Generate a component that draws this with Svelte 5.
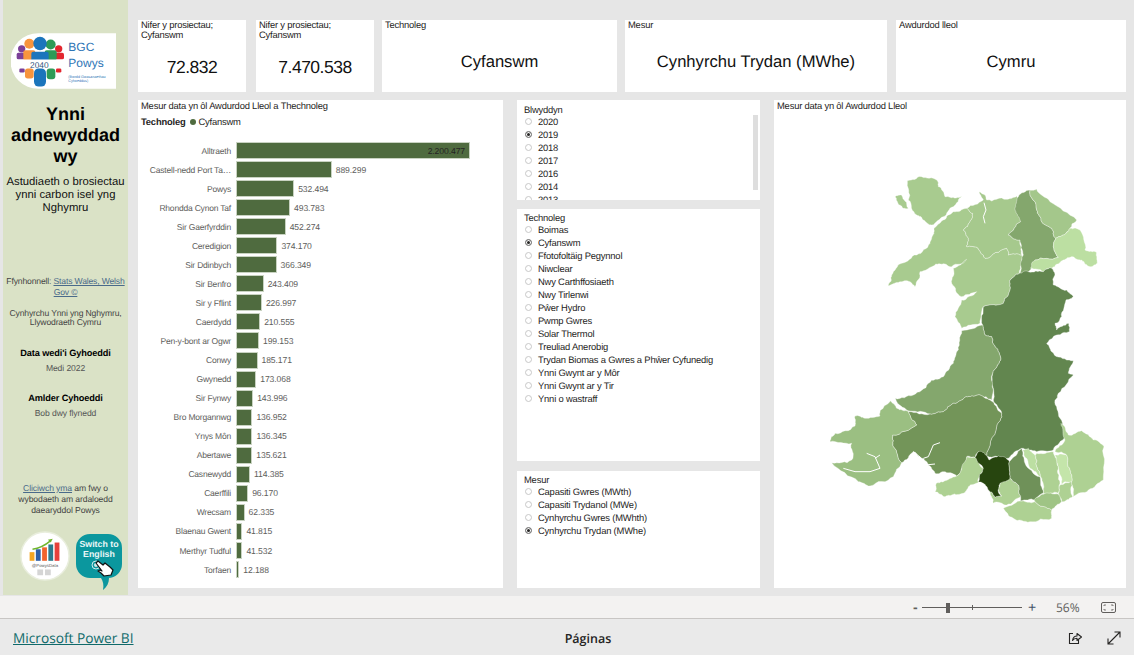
<script>
  const bars = [
    ['Alltraeth', 2200477], ['Castell-nedd Port Ta…', 889299], ['Powys', 532494],
    ['Rhondda Cynon Taf', 493783], ['Sir Gaerfyrddin', 452274], ['Ceredigion', 374170],
    ['Sir Ddinbych', 366349], ['Sir Benfro', 243409], ['Sir y Fflint', 226997],
    ['Caerdydd', 210555], ['Pen-y-bont ar Ogwr', 199153], ['Conwy', 185171],
    ['Gwynedd', 173068], ['Sir Fynwy', 143996], ['Bro Morgannwg', 136952],
    ['Ynys Môn', 136345], ['Abertawe', 135621], ['Casnewydd', 114385],
    ['Caerffili', 96170], ['Wrecsam', 62335], ['Blaenau Gwent', 41815],
    ['Merthyr Tudful', 41532], ['Torfaen', 12188]
  ];
  const maxValue = bars[0][1];
  const fmt = (n) => String(n).replace(/\B(?=(\d{3})+$)/g, '.');

  const years = ['2020', '2019', '2018', '2017', '2016', '2014', '2013'];
  const tech = [
    'Boimas', 'Cyfanswm', 'Ffotofoltäig Pegynnol', 'Niwclear', 'Nwy Carthffosiaeth',
    'Nwy Tirlenwi', 'Pŵer Hydro', 'Pwmp Gwres', 'Solar Thermol', 'Treuliad Anerobig',
    'Trydan Biomas a Gwres a Phŵer Cyfunedig', 'Ynni Gwynt ar y Môr', 'Ynni Gwynt ar y Tir',
    'Ynni o wastraff'
  ];
  const measures = ['Capasiti Gwres (MWth)', 'Capasiti Trydanol (MWe)', 'Cynhyrchu Gwres (MWhth)', 'Cynhyrchu Trydan (MWhe)'];

  // map shapes, traced in 3x coords from (780,160)
  const regions = [
    ['#a8cb8f', '382,62 425,50 470,60 475,80 495,110 510,112 545,108 520,140 490,170 455,195 430,180 410,165 385,120'],
    ['#a8cb8f', '345,110 365,105 378,125 385,145 370,145 350,122'],
    ['#a8cb8f', '455,235 462,205 490,180 520,155 560,145 578,160 570,185 550,210 565,235 560,260 590,262 615,295 680,265 685,285 725,285 718,340 690,360 685,405 670,430 610,440 600,490 545,505 525,470 545,420 590,395 545,410 515,370 520,325 560,298 515,320 495,312 460,318 420,335 405,380 390,365 365,365 325,378 335,345 365,310 410,285 450,250'],
    ['#a6c98d', '560,145 610,120 598,95 615,105 620,120 680,118 710,108 722,185 685,225 720,240 725,285 685,285 680,265 615,295 590,262 560,260 565,235 550,210 570,185 578,160'],
    ['#84a76d', '715,110 750,90 770,150 785,185 815,205 827,235 822,270 835,292 765,300 745,335 720,340 730,285 720,240 685,225 722,185 705,150'],
    ['#a4c78b', '750,90 770,87 810,125 890,180 870,205 850,225 827,235 815,205 785,185 770,150'],
    ['#bcdfa2', '870,205 900,210 915,270 950,278 952,310 930,320 905,300 878,290 850,300 830,312 815,325 790,335 752,325 765,300 835,292 822,270 827,235 850,225'],
    ['#62864f', '685,405 690,360 718,340 745,335 790,335 815,325 825,345 820,375 860,390 880,410 858,420 845,470 825,490 830,510 865,490 868,515 830,525 800,550 815,575 860,600 880,602 865,640 880,645 835,700 825,720 840,775 855,830 820,870 770,875 725,865 685,895 640,890 620,890 650,800 665,760 640,720 638,640 662,600 645,560 635,530 615,525 608,495 610,440 670,430'],
    ['#84a76d', '545,512 608,495 615,525 635,530 645,560 662,600 638,640 635,720 600,705 575,708 545,720 520,730 490,755 450,762 390,753 350,725 345,715 400,705 445,670 490,650 520,610 535,570'],
    ['#739559', '385,755 450,762 490,755 520,730 545,720 575,708 600,705 630,720 665,760 650,800 620,890 595,875 583,892 560,890 530,948 490,935 465,940 440,905 400,875 365,908 340,860 338,825 410,795'],
    ['#9bbf82', '332,722 350,745 385,755 410,795 338,825 340,860 365,908 340,950 270,978 235,965 155,908 215,900 215,850 150,845 165,820 225,798 225,768 255,775 300,768 300,752'],
    ['#aed193', '560,892 583,892 610,925 595,968 565,980 550,1000 515,1005 495,1010 465,995 468,970 490,965 530,948'],
    ['#aed193', '625,990 645,1012 665,1008 655,985 660,965 690,955 715,975 722,1010 680,1035 640,1030 635,1010'],
    ['#27450f', '595,875 612,878 628,900 665,890 688,905 690,955 660,970 655,995 665,1008 645,1012 625,990 610,970 595,965 610,925 585,892'],
    ['#aed193', '670,1045 720,1023 765,1025 815,1050 815,1075 750,1085 700,1075'],
    ['#6f9159', '688,905 725,865 735,910 780,950 790,1000 765,1020 722,1023 722,1010 715,975 690,955'],
    ['#bcdfa2', '728,870 745,865 765,885 770,920 782,950 750,925'],
    ['#aed193', '770,880 820,875 835,920 840,970 835,1000 790,1000 782,950 770,920 765,885'],
    ['#c4e5aa', '825,885 860,885 870,930 875,965 845,972 835,920'],
    ['#9fc485', '763,1018 790,1003 835,1002 845,1025 815,1050 765,1025'],
    ['#aed193', '835,1000 840,975 875,965 878,1010 860,1020 845,1025'],
    ['#aed193', '843,790 865,825 905,812 940,840 972,860 970,960 925,990 880,1010 875,965 870,930 860,885 825,875 855,840']
  ];
  const inlets = [
    '612,128 618,150 610,170 615,190',
    '838,140 860,150 890,175',
    '400,875 425,895 435,915 465,912',
    '480,848 460,855 445,890 430,895',
    '190,925 225,935 270,935 300,925 285,890 260,880',
    '300,885 285,895'
  ];

  // coastline and borders are jagged in the source map; roughen each edge
  // the offset depends only on the edge, so neighbours still share a border
  function noise(a, b, c, d) {
    const s = Math.sin(a * 12.9898 + b * 78.233 + c * 37.719 + d * 4.581) * 43758.5453;
    return s - Math.floor(s);
  }

  function splitEdge(p, q, depth, out) {
    const [a, b] = p[0] < q[0] || (p[0] === q[0] && p[1] < q[1]) ? [p, q] : [q, p];
    const dx = b[0] - a[0];
    const dy = b[1] - a[1];
    const len = Math.hypot(dx, dy);
    if (depth === 0 || len < 5) return;
    const off = (noise(a[0], a[1], b[0], b[1]) - 0.5) * Math.min(len * 0.3, 9);
    const m = [(p[0] + q[0]) / 2 - (dy / len) * off, (p[1] + q[1]) / 2 + (dx / len) * off];
    splitEdge(p, m, depth - 1, out);
    out.push(m);
    splitEdge(m, q, depth - 1, out);
  }

  function rough(pts) {
    const list = pts.split(' ').map((s) => s.split(',').map(Number));
    const out = [];
    list.forEach((p, i) => {
      out.push(p);
      splitEdge(p, list[(i + 1) % list.length], 3, out);
    });
    return out.map((p) => p[0].toFixed(1) + ',' + p[1].toFixed(1)).join(' ');
  }
</script>

<div class="page">
  <div class="canvas">
    <aside class="side">
      <svg class="logo" viewBox="33 99 315 167" aria-label="BGC Powys">
        <path d="M115 99H348V266H115A83 83 0 0 1 115 99Z" fill="#fff" />
        <circle cx="65" cy="146" r="11" fill="#7b3f98" /><rect x="50" y="158" width="28" height="20" rx="5" fill="#7b3f98" />
        <circle cx="176" cy="146" r="11" fill="#e3262e" /><rect x="162" y="158" width="30" height="20" rx="5" fill="#e3262e" />
        <circle cx="88" cy="131" r="15" fill="#f7943d" /><rect x="70" y="150" width="36" height="30" rx="6" fill="#f7943d" />
        <circle cx="152" cy="133" r="15" fill="#2e9b57" /><rect x="134" y="150" width="36" height="30" rx="6" fill="#2e9b57" />
        <circle cx="120" cy="130" r="20" fill="#1b75bc" /><rect x="94" y="155" width="52" height="30" rx="6" fill="#1b75bc" />
        <rect x="40" y="178" width="155" height="27" fill="#fff" />
        <rect x="58" y="205" width="16" height="12" rx="4" fill="#7b3f98" />
        <rect x="168" y="205" width="16" height="12" rx="4" fill="#e3262e" />
        <rect x="75" y="205" width="26" height="30" rx="8" fill="#f7943d" />
        <rect x="140" y="205" width="26" height="32" rx="9" fill="#2e9b57" />
        <rect x="102" y="205" width="36" height="54" rx="14" fill="#1b75bc" />
        <text x="118" y="203" class="l2040">2040</text>
        <text x="205" y="153" class="lbig">BGC</text>
        <text x="205" y="201" class="lbig">Powys</text>
        <text x="205" y="232" class="ltiny">(Bwrdd Gwasanaethau</text>
        <text x="205" y="245" class="ltiny">Cyhoeddus)</text>
      </svg>

      <h1>Ynni adnewyddadwy</h1>
      <p class="sub">Astudiaeth o brosiectau ynni carbon isel yng Nghymru</p>

      <p class="src">Ffynhonnell: <u>Stats Wales, Welsh Gov ©</u></p>
      <p class="note">Cynhyrchu Ynni yng Nghymru, Llywodraeth Cymru</p>
      <h2 class="first">Data wedi'i Gyhoeddi</h2>
      <p class="val">Medi 2022</p>
      <h2>Amlder Cyhoeddi</h2>
      <p class="val">Bob dwy flynedd</p>
      <p class="more"><u>Cliciwch yma</u> am fwy o wybodaeth am ardaloedd daearyddol Powys</p>

      <div class="badges">
        <svg class="data-logo" viewBox="0 0 52 52">
          <circle cx="26" cy="26" r="25" fill="#fff" stroke="#e9eedd" stroke-width="1.5" />
          <rect x="10" y="22" width="5" height="9" fill="#f5a623" />
          <rect x="16.500" y="19" width="5" height="12" fill="#2f5fa8" />
          <rect x="23" y="17" width="5" height="14" fill="#f0642e" />
          <rect x="29.500" y="14" width="5" height="17" fill="#2b7a8c" />
          <rect x="36" y="12" width="5" height="19" fill="#e5403a" />
          <path d="M13 19C20 18 26 15 32 10" fill="none" stroke="#6fb52c" stroke-width="1.500" />
          <path d="M34 8L29 9L32 12Z" fill="#6fb52c" />
          <text x="26" y="37" class="pd">@PowysData</text>
          <rect x="18" y="40" width="6" height="6" fill="#d5d5d5" /><rect x="26" y="40" width="6" height="6" fill="#d5d5d5" />
        </svg>
        <svg class="switch" viewBox="0 0 46 56">
          <path d="M14 0H32A14 14 0 0 1 46 14V30A14 14 0 0 1 32 44H33C33 49 31 53 27 56C28 51 27 47 25 44H14A14 14 0 0 1 0 30V14A14 14 0 0 1 14 0Z" fill="#0b979e" />
          <text x="23" y="13" class="sw">Switch to</text>
          <text x="23" y="23" class="sw">English</text>
          <circle cx="20" cy="31" r="4" fill="none" stroke="#cfeaea" stroke-width="1" />
          <circle cx="20" cy="31" r="2" fill="#cfeaea" />
          <path d="M20 29L22 27L27 31L29 29L34 33L37 36L35 41L28 42L25 39L22 37L24 36L26 37Z" fill="#fff" stroke="#111" stroke-width="1.200" stroke-linejoin="round" />
        </svg>
      </div>
    </aside>

    <main class="main">
      <section class="cards">
        <div class="card c1"><span class="cap">Nifer y prosiectau; Cyfanswm</span><b class="num">72.832</b></div>
        <div class="card c2"><span class="cap">Nifer y prosiectau; Cyfanswm</span><b class="num">7.470.538</b></div>
        <div class="card wide c3"><span class="cap">Technoleg</span><b class="num">Cyfanswm</b></div>
        <div class="card wide c4"><span class="cap">Mesur</span><b class="num">Cynhyrchu Trydan (MWhe)</b></div>
        <div class="card wide c5"><span class="cap">Awdurdod lleol</span><b class="num">Cymru</b></div>
      </section>

      <section class="lower">
        <div class="panel chart">
          <div class="cap">Mesur data yn ôl Awdurdod Lleol a Thechnoleg</div>
          <div class="legend"><b>Technoleg</b><i></i>Cyfanswm</div>
          <div class="rows">
            {#each bars as [name, value], i}
              <div class="row">
                <span class="lbl">{name}</span>
                <span class="bar" style="width:{(value / maxValue) * 232}px">
                  {#if i === 0}<em>{fmt(value)}</em>{/if}
                </span>
                {#if i > 0}<span class="v">{fmt(value)}</span>{/if}
              </div>
            {/each}
          </div>
        </div>

        <div class="slicers">
          <div class="panel slicer s1">
            <div class="cap">Blwyddyn</div>
            <ul>
              {#each years as y}
                <li class:on={y === '2019'}><i></i>{y}</li>
              {/each}
            </ul>
            <span class="scroll"></span>
          </div>
          <div class="panel slicer s2">
            <div class="cap">Technoleg</div>
            <ul>
              {#each tech as t}
                <li class:on={t === 'Cyfanswm'}><i></i>{t}</li>
              {/each}
            </ul>
          </div>
          <div class="panel slicer s3">
            <div class="cap">Mesur</div>
            <ul>
              {#each measures as m}
                <li class:on={m === 'Cynhyrchu Trydan (MWhe)'}><i></i>{m}</li>
              {/each}
            </ul>
          </div>
        </div>

        <div class="panel map">
          <div class="cap">Mesur data yn ôl Awdurdod Lleol</div>
          <svg class="wales" viewBox="-18 -180 1056 1464">
            {#each regions as [fill, pts]}
              <polygon points={rough(pts)} {fill} stroke="#fff" stroke-opacity="0.7" stroke-width="1.5" stroke-linejoin="round" />
            {/each}
            {#each inlets as pts}
              <polyline points={pts} fill="none" stroke="#fff" stroke-width="3" />
            {/each}
          </svg>
        </div>
      </section>
    </main>
  </div>

  <div class="zoombar">
    <span class="minus">-</span>
    <span class="slider"><i class="tick"></i><i class="thumb"></i></span>
    <span class="plus">+</span>
    <span class="pct">56%</span>
    <svg class="fit" viewBox="0 0 15 11" width="15" height="11">
      <rect x="0.500" y="0.500" width="14" height="10" rx="1.500" fill="none" stroke="#605e5c" />
      <path d="M3 4V3H5M10 3H12V4M12 7V8H10M5 8H3V7" fill="none" stroke="#605e5c" stroke-width="0.800" />
    </svg>
  </div>

  <footer class="foot">
    <a class="brand" href="#top">Microsoft Power BI</a>
    <span class="pages">Páginas</span>
    <div class="actions">
      <svg viewBox="0 0 14 14" width="14" height="14">
        <path d="M5 2.500H1.500V12.500H10.500V9" fill="none" stroke="#252423" stroke-width="1.100" />
        <path d="M4.500 9.500C5 6.500 7 5 9 5V2.500L13.500 6L9 9.500V7.200C7.500 7.200 5.500 7.800 4.500 9.500Z" fill="none" stroke="#252423" stroke-width="1.100" stroke-linejoin="round" />
      </svg>
      <svg viewBox="0 0 14 14" width="14" height="14">
        <path d="M1 13L13 1M7.500 1H13V6.500M1 7.500V13H6.500" fill="none" stroke="#252423" stroke-width="1.100" />
      </svg>
    </div>
  </footer>
</div>

<style>
  :global(body) {
    margin: 0;
    background: #e6e6e6;
    font-family: "Liberation Sans", Arial, sans-serif;
    text-rendering: geometricPrecision;
    overflow: hidden;
  }

  .page {
    height: 655px;
    display: flex;
    flex-direction: column;
    color: #252423;
  }

  .canvas {
    height: 596px;
    display: flex;
    box-sizing: border-box;
    padding-left: 3px;
  }

  /* left column */
  .side {
    width: 125px;
    height: 595px;
    background: #dae2c6;
    display: flex;
    flex-direction: column;
    align-items: center;
    text-align: center;
    box-sizing: border-box;
    padding-top: 33px;
    flex: none;
  }

  .logo {
    width: 105px;
    height: 56px;
    margin-left: -4px;
    flex: none;
  }

  .lbig { font-size: 36px; fill: #2e75b6; }
  .ltiny { font-size: 11px; fill: #2e75b6; }
  .l2040 { font-size: 25px; fill: #1f4e79; text-anchor: middle; }

  h1 {
    font-size: 18px;
    line-height: 21px;
    margin: 15px 0 0;
    width: 112px;
    color: #000;
    overflow-wrap: anywhere;
  }

  .sub {
    font-size: 11.300px;
    line-height: 13px;
    margin: 9px 0 0;
    color: #111;
    width: 122px;
  }

  .src {
    font-size: 8.600px;
    letter-spacing: -0.160px;
    line-height: 11px;
    margin: 61px 0 0;
    color: #444;
    width: 124px;
  }

  .src u, .more u { color: #4a6a8a; }

  .note {
    font-size: 8.600px;
    letter-spacing: -0.160px;
    line-height: 9px;
    margin: 11px 0 0;
    color: #444;
    width: 122px;
  }

  h2 {
    font-size: 9.200px;
    letter-spacing: -0.100px;
    line-height: 12px;
    margin: 19px 0 0;
    color: #000;
  }

  h2.first { margin-top: 20px; }

  .val {
    font-size: 8.600px;
    letter-spacing: -0.100px;
    line-height: 10px;
    margin: 4px 0 0;
    color: #555;
  }

  .more {
    font-size: 8.600px;
    letter-spacing: -0.100px;
    line-height: 11px;
    margin: 65px 0 0;
    color: #444;
    width: 104px;
  }

  .badges {
    display: flex;
    gap: 6px;
    margin-top: 15px;
    align-items: flex-start;
    margin-left: 11px;
  }

  .data-logo { width: 50px; height: 50px; }
  .switch { width: 46px; height: 56px; margin-top: 3px; }
  .pd { font-size: 4.500px; text-anchor: middle; fill: #555; }
  .sw { font-size: 8.800px; font-weight: 700; text-anchor: middle; fill: #eaf6f6; }

  /* report area */
  .main {
    margin-left: 10px;
    width: 988px;
    padding-top: 20px;
    box-sizing: border-box;
  }

  .cards {
    display: flex;
    gap: 8px;
    height: 72px;
  }

  .card {
    background: #fff;
    position: relative;
    padding: 0 3px;
    box-sizing: border-box;
    display: flex;
    flex-direction: column;
    flex: none;
  }

  .c1 { width: 108px; }
  .c2 { width: 118px; margin-left: 2px; }
  .c3 { width: 235px; }
  .c4 { width: 262px; }
  .c5 { width: 230px; margin-left: 1px; }

  .cap {
    font-size: 9.400px;
    letter-spacing: -0.190px;
    line-height: 10px;
    color: #252423;
  }

  .num {
    font-weight: 400;
    font-size: 17.500px;
    letter-spacing: -0.500px;
    color: #111;
    text-align: center;
    position: absolute;
    left: 0;
    right: 0;
    top: 37px;
    line-height: 20px;
  }

  .wide .num { font-size: 16.600px; letter-spacing: 0; top: 32px; }

  .lower {
    display: flex;
    margin-top: 8px;
    height: 488px;
  }

  .panel { background: #fff; box-sizing: border-box; }

  .chart { width: 365px; padding: 1px 3px; }

  .legend {
    font-size: 9.400px;
    letter-spacing: -0.190px;
    line-height: 12px;
    margin-top: 5px;
    display: flex;
    align-items: center;
    color: #252423;
  }

  .legend b { margin-right: 5px; }
  .legend i {
    width: 6px;
    height: 6px;
    border-radius: 50%;
    background: #4f6b3f;
    margin-right: 2px;
  }

  .rows { margin: 13px 0 0 -3px; }

  .row {
    display: flex;
    align-items: center;
    height: 19.050px;
  }

  .lbl {
    width: 93px;
    margin-right: 6px;
    text-align: right;
    font-size: 8.500px;
    letter-spacing: -0.200px;
    color: #605e5c;
    white-space: nowrap;
    flex: none;
  }

  .bar {
    height: 15px;
    background: #4f6b3f;
    outline: 1px solid #c9d3c2;
    display: flex;
    justify-content: flex-end;
    align-items: center;
    flex: none;
  }

  .bar em {
    font-style: normal;
    font-size: 8.600px;
    letter-spacing: -0.100px;
    color: #252423;
    padding-right: 4px;
  }

  .v {
    font-size: 8.600px;
    letter-spacing: -0.100px;
    margin-left: 5px;
    color: #605e5c;
  }

  .slicers {
    margin-left: 14px;
    width: 243px;
    display: flex;
    flex-direction: column;
    flex: none;
  }

  .slicer { padding: 4px 7px; position: relative; overflow: hidden; }
  .s1 { height: 100px; padding-top: 5px; }
  .s2 { height: 252px; margin-top: 9px; }
  .s3 { height: 117px; margin-top: 10px; }

  ul { list-style: none; margin: 0; padding: 0; }

  li {
    font-size: 9.400px;
    letter-spacing: -0.180px;
    line-height: 13px;
    display: flex;
    align-items: center;
    color: #252423;
    white-space: nowrap;
  }

  li i {
    width: 5px;
    height: 5px;
    border: 1px solid #c8c8c8;
    border-radius: 50%;
    margin: 0 6px 0 1px;
    background: #fff;
    flex: none;
  }

  li.on i {
    background: #252423;
    box-shadow: inset 0 0 0 1px #fff;
    border-color: #8a8a8a;
  }

  .scroll {
    position: absolute;
    right: 2px;
    top: 15px;
    width: 5px;
    height: 75px;
    background: #dedede;
  }

  .map {
    margin-left: 14px;
    width: 352px;
    position: relative;
    padding: 1px 3px;
  }

  .wales {
    position: absolute;
    left: 0;
    top: 0;
    width: 352px;
    height: 488px;
  }

  /* bottom bars */
  .zoombar {
    height: 22px;
    background: #f3f2f1;
    border-bottom: 1px solid #c8c6c4;
    display: flex;
    align-items: center;
    color: #605e5c;
    position: relative;
  }

  .minus { margin-left: 913px; font-weight: 700; font-size: 14px; width: 9px; }

  .slider {
    width: 100px;
    height: 1px;
    background: #605e5c;
    position: relative;
  }

  .tick {
    position: absolute;
    left: 50px;
    top: -2px;
    width: 1px;
    height: 5px;
    background: #605e5c;
  }

  .thumb {
    position: absolute;
    left: 24px;
    top: -4px;
    width: 4px;
    height: 10px;
    background: #605e5c;
  }

  .plus { margin-left: 6px; font-size: 14px; width: 10px; color: #44546a; }
  .pct { margin-left: 18px; font-size: 12px; font-family: "Open Sans", sans-serif; width: 30px; }
  .fit { margin-left: 15px; }

  .foot {
    height: 36px;
    background: #eaeaea;
    display: flex;
    align-items: center;
    position: relative;
    box-sizing: border-box;
    padding-top: 2px;
  }

  .brand {
    margin-left: 13px;
    font-family: "Open Sans", sans-serif;
    font-size: 13.700px;
    color: #106a6a;
    text-decoration: underline;
  }

  .pages {
    position: absolute;
    left: 0;
    right: 0;
    text-align: center;
    padding-left: 42px;
    font-family: "Open Sans", sans-serif;
    font-size: 12.500px;
    font-weight: 600;
    color: #252423;
  }

  .actions {
    margin-left: auto;
    margin-right: 13px;
    display: flex;
    gap: 25px;
    position: relative;
  }
</style>
